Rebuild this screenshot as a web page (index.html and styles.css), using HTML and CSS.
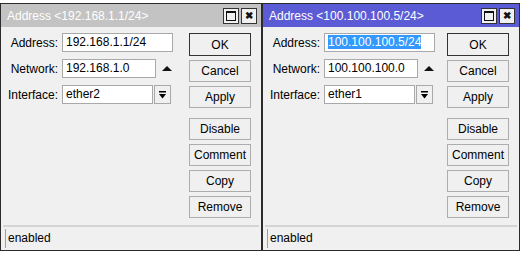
FILE: index.html
```html
<!DOCTYPE html>
<html lang="en">
<head>
  <meta charset="UTF-8" />
  <title>Address</title>
  <link rel="stylesheet" href="styles.css">
</head>
<body>
  <div class="desk">
    <div class="window">
      <div class="titlebar inactive">
        <span class="title">Address &lt;192.168.1.1/24&gt;</span>
        <span class="tb-btn"><span class="max-icon"></span></span>
        <span class="tb-btn close">&#x2716;</span>
      </div>
      <div class="body">
        <div class="form">
          <div class="row">
            <label>Address:</label>
            <div class="field wide">192.168.1.1/24</div>
          </div>
          <div class="row">
            <label>Network:</label>
            <div class="field mid">192.168.1.0</div>
            <span class="arrow-up"></span>
          </div>
          <div class="row">
            <label>Interface:</label>
            <div class="field combo">ether2</div>
            <span class="drop">
              <svg width="7" height="8" viewBox="0 0 7 8"><rect x="0" y="0" width="7" height="1.5" fill="#000"/><path d="M0 3h7L3.5 7.5z" fill="#000"/></svg>
            </span>
          </div>
        </div>
        <div class="buttons">
          <button class="default">OK</button>
          <button>Cancel</button>
          <button>Apply</button>
          <button class="gap">Disable</button>
          <button>Comment</button>
          <button>Copy</button>
          <button>Remove</button>
        </div>
      </div>
      <div class="status"><div class="status-cell">enabled</div></div>
    </div>
    <div class="window">
      <div class="titlebar active">
        <span class="title">Address &lt;100.100.100.5/24&gt;</span>
        <span class="tb-btn"><span class="max-icon"></span></span>
        <span class="tb-btn close">&#x2716;</span>
      </div>
      <div class="body">
        <div class="form">
          <div class="row">
            <label>Address:</label>
            <div class="field wide"><span class="selected">100.100.100.5/24</span></div>
          </div>
          <div class="row">
            <label>Network:</label>
            <div class="field mid">100.100.100.0</div>
            <span class="arrow-up"></span>
          </div>
          <div class="row">
            <label>Interface:</label>
            <div class="field combo">ether1</div>
            <span class="drop">
              <svg width="7" height="8" viewBox="0 0 7 8"><rect x="0" y="0" width="7" height="1.5" fill="#000"/><path d="M0 3h7L3.5 7.5z" fill="#000"/></svg>
            </span>
          </div>
        </div>
        <div class="buttons">
          <button class="default">OK</button>
          <button>Cancel</button>
          <button>Apply</button>
          <button class="gap">Disable</button>
          <button>Comment</button>
          <button>Copy</button>
          <button>Remove</button>
        </div>
      </div>
      <div class="status"><div class="status-cell">enabled</div></div>
    </div>
  </div>
</body>
</html>
```
FILE: styles.css
```css
body {
  margin: 0;
  padding: 0;
  background: #fff;
  font-family: 'Liberation Sans', Arial, sans-serif;
  font-size: 12px;
  color: #000;
}
.desk {
  display: flex;
  padding-top: 3px;
}
.window {
  display: flex;
  flex-direction: column;
  width: 260px;
  height: 246px;
  border: 1px solid #2b2b2b;
  background: #f0f0f0;
}
.window + .window {
  width: 256px;
}
.titlebar {
  display: flex;
  align-items: center;
  height: 23px;
  padding: 0 4px 0 6px;
  color: #fff;
  gap: 2px;
}
.titlebar.inactive {
  background: #c3c3c3;
}
.titlebar.active {
  background: #5b5bd6;
}
.title {
  flex: 1;
}
.tb-btn {
  width: 14px;
  height: 14px;
  border: 1px solid #333;
  background: #f0f0f0;
  color: #111;
  display: flex;
  align-items: center;
  justify-content: center;
  font-size: 10px;
  font-weight: bold;
}
.max-icon {
  width: 8px;
  height: 7px;
  border: 1px solid #111;
  border-top-width: 2px;
}
.body {
  flex: 1;
  display: flex;
  padding: 6px 10px 0 0;
}
.form {
  flex: 1;
  display: flex;
  flex-direction: column;
  gap: 7px;
}
.row {
  display: flex;
  align-items: center;
  height: 19px;
}
.row label {
  width: 57px;
  text-align: right;
  padding-right: 4px;
}
.field {
  height: 17px;
  line-height: 17px;
  border: 1px solid #a9a9a9;
  background: #fff;
  padding: 0 3px;
}
.wide { width: 103px; }
.mid { width: 86px; }
.combo { width: 83px; }
.selected {
  background: #3399ff;
  color: #fff;
}
.arrow-up {
  margin-left: 6px;
  width: 0;
  height: 0;
  border-left: 5px solid transparent;
  border-right: 5px solid transparent;
  border-bottom: 5px solid #111;
}
.drop {
  width: 15px;
  height: 17px;
  margin-left: 1px;
  border: 1px solid #a9a9a9;
  background: #f0f0f0;
  display: flex;
  align-items: center;
  justify-content: center;
}
.buttons {
  display: flex;
  flex-direction: column;
  gap: 4px;
  width: 62px;
}
button {
  height: 22px;
  font-family: 'Liberation Sans', Arial, sans-serif;
  font-size: 12px;
  color: #000;
  background: #f0f0f0;
  border: 1px solid #adadad;
  border-radius: 0;
  padding: 0;
}
button.default {
  border: 1px solid #333;
  height: 23px;
}
button.gap {
  margin-top: 6px;
}
.status {
  border-top: 2px solid #d4d4d4;
  padding: 2px 8px 2px 2px;
  margin: 0 2px;
}
.status-cell {
  height: 19px;
  line-height: 19px;
  border-left: 1px solid #a0a0a0;
  padding-left: 2px;
}
```
